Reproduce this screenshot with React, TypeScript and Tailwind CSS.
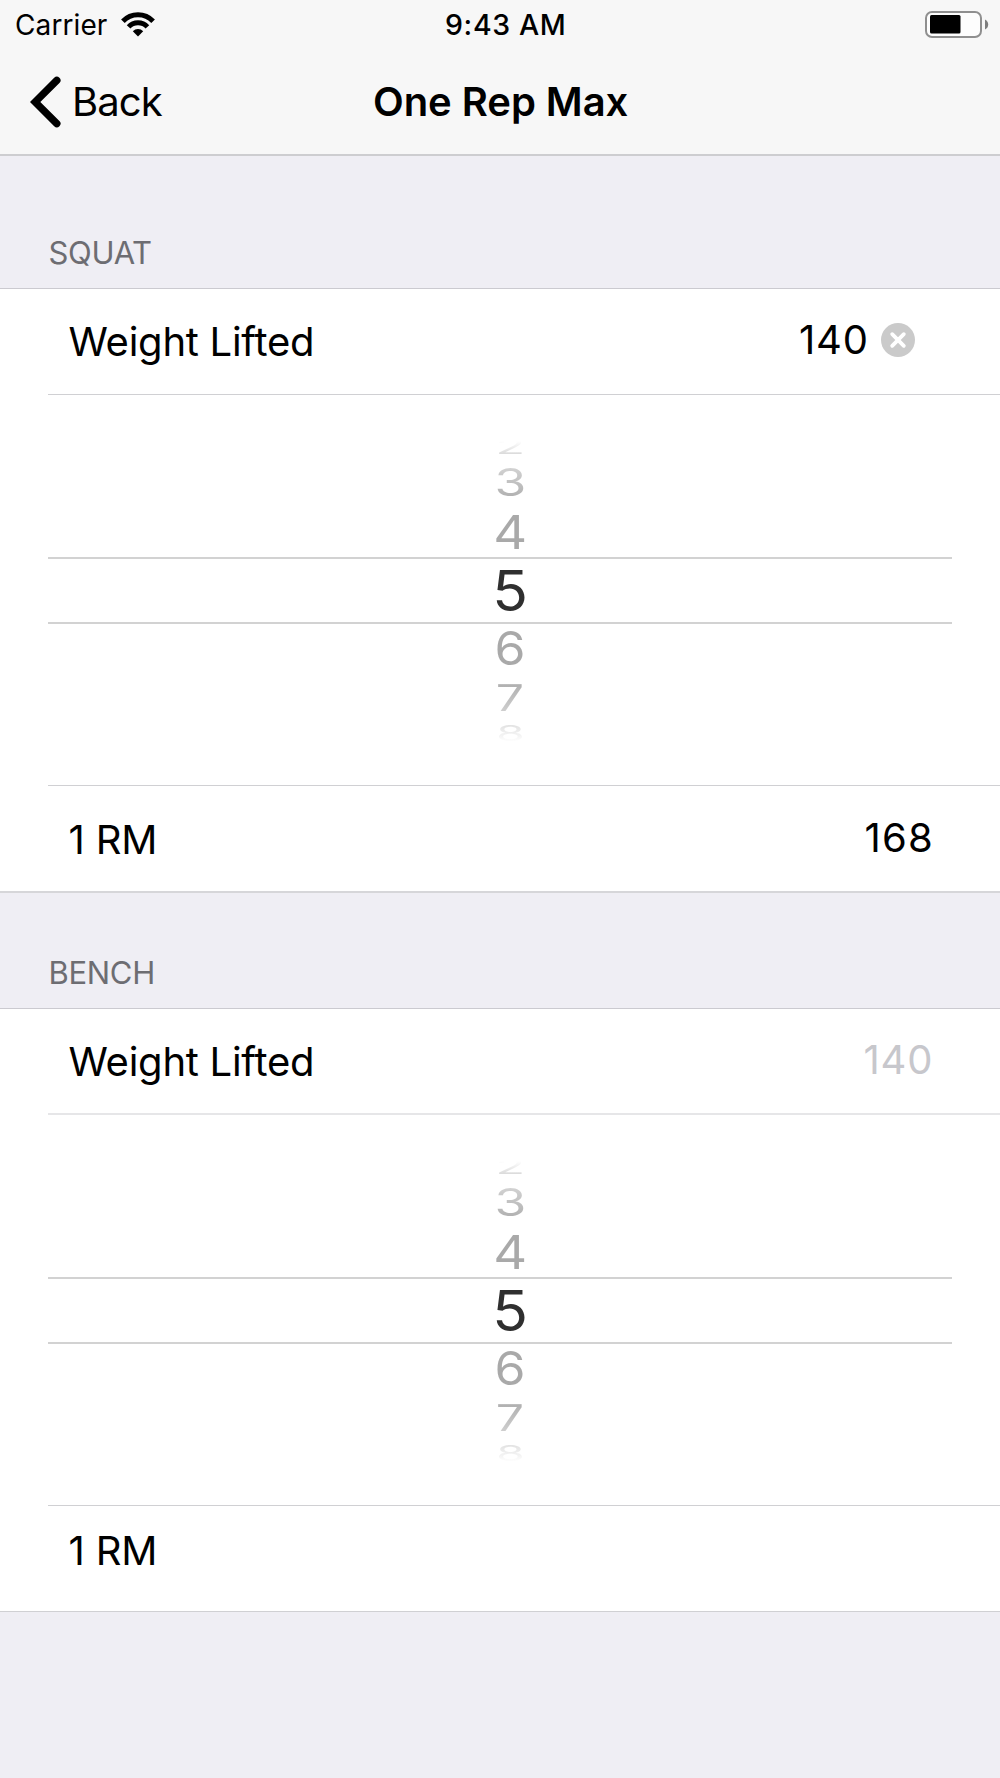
import { useState } from 'react';
import { clsx } from 'clsx';

interface LiftSectionProps {
  title: string;
  initialWeight: string;
  result: string;
  headerClass: string;
  weightRowClass: string;
  resultRowClass: string;
}

const PLACEHOLDER = '140';

// Slots above and below the selected value, squashed like a rotating wheel
const SLOTS_ABOVE = [
  { value: 2, slot: 'h-[22px]', digit: 'scale-x-[0.97] scale-y-[0.42] from-[#ffffff] from-20% to-[#dadada]' },
  { value: 3, slot: 'h-[49px]', digit: 'scale-x-[1.03] scale-y-[0.75] from-[#d2d2d2] to-[#b2b2b2]' },
  { value: 4, slot: 'h-[51px]', digit: 'scale-x-[1.05] scale-y-[0.92] from-[#a9a9a9] to-[#a9a9a9]' },
];

const SLOTS_BELOW = [
  { value: 6, slot: 'h-[48px]', digit: 'scale-x-[1.0] scale-y-[0.93] from-[#a9a9a9] to-[#a9a9a9]' },
  { value: 7, slot: 'h-[51px]', digit: 'scale-x-[1.0] scale-y-[0.73] from-[#b0b0b0] to-[#cfcfcf]' },
  { value: 8, slot: 'h-[20px]', digit: 'scale-x-[0.92] scale-y-[0.42] from-[#e2e2e2] to-[#fdfdfd]' },
];

function WifiIcon() {
  return (
    <svg width="34" height="25" viewBox="0 0 34 25" fill="none">
      <path d="M1.9 9.2A20.8 20.8 0 0 1 32.1 9.2" stroke="black" strokeWidth="5" />
      <path d="M7.6 14.9A12.8 12.8 0 0 1 26.4 14.9" stroke="black" strokeWidth="5" />
      <path d="M17 24.6L11.8 19.2A7.5 7.5 0 0 1 22.2 19.2Z" fill="black" />
    </svg>
  );
}

function BatteryIcon() {
  return (
    <svg width="64" height="27" viewBox="0 0 64 27" fill="none">
      <rect x="1" y="1" width="55" height="25" rx="6" fill="#fdfdfd" stroke="#8f8f8f" strokeWidth="2" />
      <rect x="5" y="4" width="30.5" height="18.5" rx="1.5" fill="black" />
      <path d="M60 8.5C64.3 10.5 64.3 16.5 60 18.5Z" fill="#7d7d7d" />
    </svg>
  );
}

function ClearIcon() {
  return (
    <svg width="34" height="34" viewBox="0 0 34 34" fill="none">
      <circle cx="17" cy="17" r="17" fill="#cacaca" />
      <path d="M11.2 11.2L22.8 22.8M22.8 11.2L11.2 22.8" stroke="white" strokeWidth="3.8" strokeLinecap="round" />
    </svg>
  );
}

function StatusBar() {
  return (
    <div className="flex h-[48px] items-start pl-[15px] pr-[11px]">
      <div className="flex w-[430px] items-start">
        <span className="mt-[8px] text-[28px] leading-[34px] tracking-[0.1px]">Carrier</span>
        <span className="ml-[14px] mt-[12px]">
          <WifiIcon />
        </span>
      </div>
      <span className="mt-[8px] text-[28.5px] leading-[34px] font-[540] tracking-[0.65px]">9:43 AM</span>
      <div className="flex flex-1 justify-end pt-[11px]">
        <BatteryIcon />
      </div>
    </div>
  );
}

function NavBar() {
  return (
    <div className="flex items-start pl-[30px] pt-[28px]">
      <button type="button" className="flex w-[343px] items-start text-left">
        <svg width="32" height="53" viewBox="0 0 32 53" fill="none">
          <path d="M26.8 4.4L5.2 26L26.8 47.6" stroke="black" strokeWidth="7.4" strokeLinecap="round" />
        </svg>
        <span className="ml-[10px] mt-[1px] text-[40px] leading-[49px] tracking-[-0.95px]">Back</span>
      </button>
      <h1 className="mt-[1px] text-[40px] leading-[49px] font-[570] tracking-[-0.05px]">One Rep Max</h1>
    </div>
  );
}

function WheelSlot({ value, slot, digit }: { value: number; slot: string; digit: string }) {
  return (
    <div className={clsx('flex items-center justify-center', slot)}>
      <span
        className={clsx(
          'block bg-linear-to-b bg-clip-text text-[50px] leading-[38px] text-transparent',
          digit,
        )}
      >
        {value}
      </span>
    </div>
  );
}

function RepsPicker() {
  return (
    <div className="h-[390px] pl-[48px] pr-[48px] pt-[40px]">
      <div className="pl-[20px]">
        {SLOTS_ABOVE.map((s) => (
          <WheelSlot key={s.value} {...s} />
        ))}
      </div>
      <div className="flex h-[67px] items-center justify-center border-y-2 border-[#d2d2d2] pl-[20px] text-[#2f2f2f]">
        <span className="scale-x-[1.05] text-[56px] leading-[62px]">5</span>
      </div>
      <div className="pl-[20px]">
        {SLOTS_BELOW.map((s) => (
          <WheelSlot key={s.value} {...s} />
        ))}
      </div>
    </div>
  );
}

function LiftSection({
  title,
  initialWeight,
  result,
  headerClass,
  weightRowClass,
  resultRowClass,
}: LiftSectionProps) {
  const [weight, setWeight] = useState(initialWeight);

  return (
    <section>
      <h2
        className={clsx(
          'flex items-end border-b border-[#cbcad0] pb-[17px] pl-[48.5px] text-[31px] leading-[37px] tracking-[-0.3px] text-[#6d6d72]',
          headerClass,
        )}
      >
        {title}
      </h2>
      <div className="bg-white">
        <div className={clsx('ml-[48px] flex h-[106px] items-start pl-[20.5px]', weightRowClass)}>
          <span className="mt-[28px] flex-1 text-[40px] leading-[49px] tracking-[-0.26px]">Weight Lifted</span>
          <span
            className={clsx(
              'mt-[26px] text-[40px] leading-[49px] tracking-[0.9px]',
              weight ? 'mr-[12px]' : 'mr-[66.5px] text-[#c7c7cc]',
            )}
          >
            {weight || PLACEHOLDER}
          </span>
          {weight && (
            <button type="button" onClick={() => setWeight('')} className="mr-[85px] mt-[34px]">
              <ClearIcon />
            </button>
          )}
        </div>
        <RepsPicker />
        <div className="ml-[48px] border-t border-[#d0d0d3]" />
        <div className={clsx('flex items-start pl-[68.5px] pr-[66px] text-[40px] leading-[49px]', resultRowClass)}>
          <span className="flex-1 tracking-[-0.15px]">1 RM</span>
          <span className="-mt-[2px] tracking-[1.2px]">{result}</span>
        </div>
      </div>
    </section>
  );
}

export default function App() {
  return (
    <div className="h-[1778px] w-[1000px] overflow-hidden bg-[#efeef4] font-[Inter,sans-serif] text-black">
      <header className="h-[156px] border-b-2 border-[#cdcdd0] bg-[#f7f7f7]">
        <StatusBar />
        <NavBar />
      </header>
      <LiftSection
        title="SQUAT"
        initialWeight="140"
        result="168"
        headerClass="h-[133px]"
        weightRowClass="border-b border-[#d0d0d3]"
        resultRowClass="h-[107px] border-b-2 border-[#d6d6d9] pt-[29px]"
      />
      <LiftSection
        title="BENCH"
        initialWeight=""
        result=""
        headerClass="h-[116px]"
        weightRowClass="border-b-2 border-[#e6e6e8]"
        resultRowClass="h-[106px] border-b border-[#d0d0d3] pt-[20px]"
      />
    </div>
  );
}
